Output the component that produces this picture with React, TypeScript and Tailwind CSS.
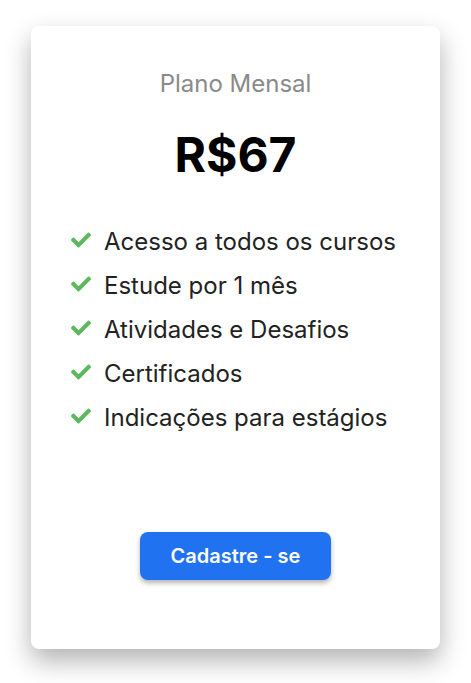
import { FaCheck } from "react-icons/fa";

const items = [
  "Acesso a todos os cursos",
  "Estude por 1 mês",
  "Atividades e Desafios",
  "Certificados",
  "Indicações para estágios",
];

const App = () => {
  return (
    <div className="min-h-screen bg-white pt-[26px] font-['Inter',sans-serif]">
      <div className="mx-auto flex h-[623px] w-[409px] flex-col items-center rounded-lg bg-white shadow-[0_12px_26px_rgba(0,0,0,0.3)]">
        <h2 className="mt-[42px] text-[24px] leading-[32px] text-[#8a8a8a]">Plano Mensal</h2>
        <p className="mt-[31px] text-[48px] font-bold leading-none text-black">R$67</p>

        <ul className="mt-[49px] flex w-full flex-col gap-[16px] pl-[40px]">
          {items.map((item) => (
            <li key={item} className="flex h-[28px] items-center gap-[13px] text-[24px] text-[#222]">
              <FaCheck className="mb-[5px] h-[20px] w-[20px] shrink-0 text-[#5cb85c]" />
              <span>{item}</span>
            </li>
          ))}
        </ul>

        <button className="mt-auto mb-[69px] h-[48px] w-[191px] rounded-lg bg-[#2172f0] text-[20px] font-semibold text-white shadow-[0_3px_5px_rgba(0,0,0,0.3)]">
          Cadastre - se
        </button>
      </div>
    </div>
  );
};

export default App;
